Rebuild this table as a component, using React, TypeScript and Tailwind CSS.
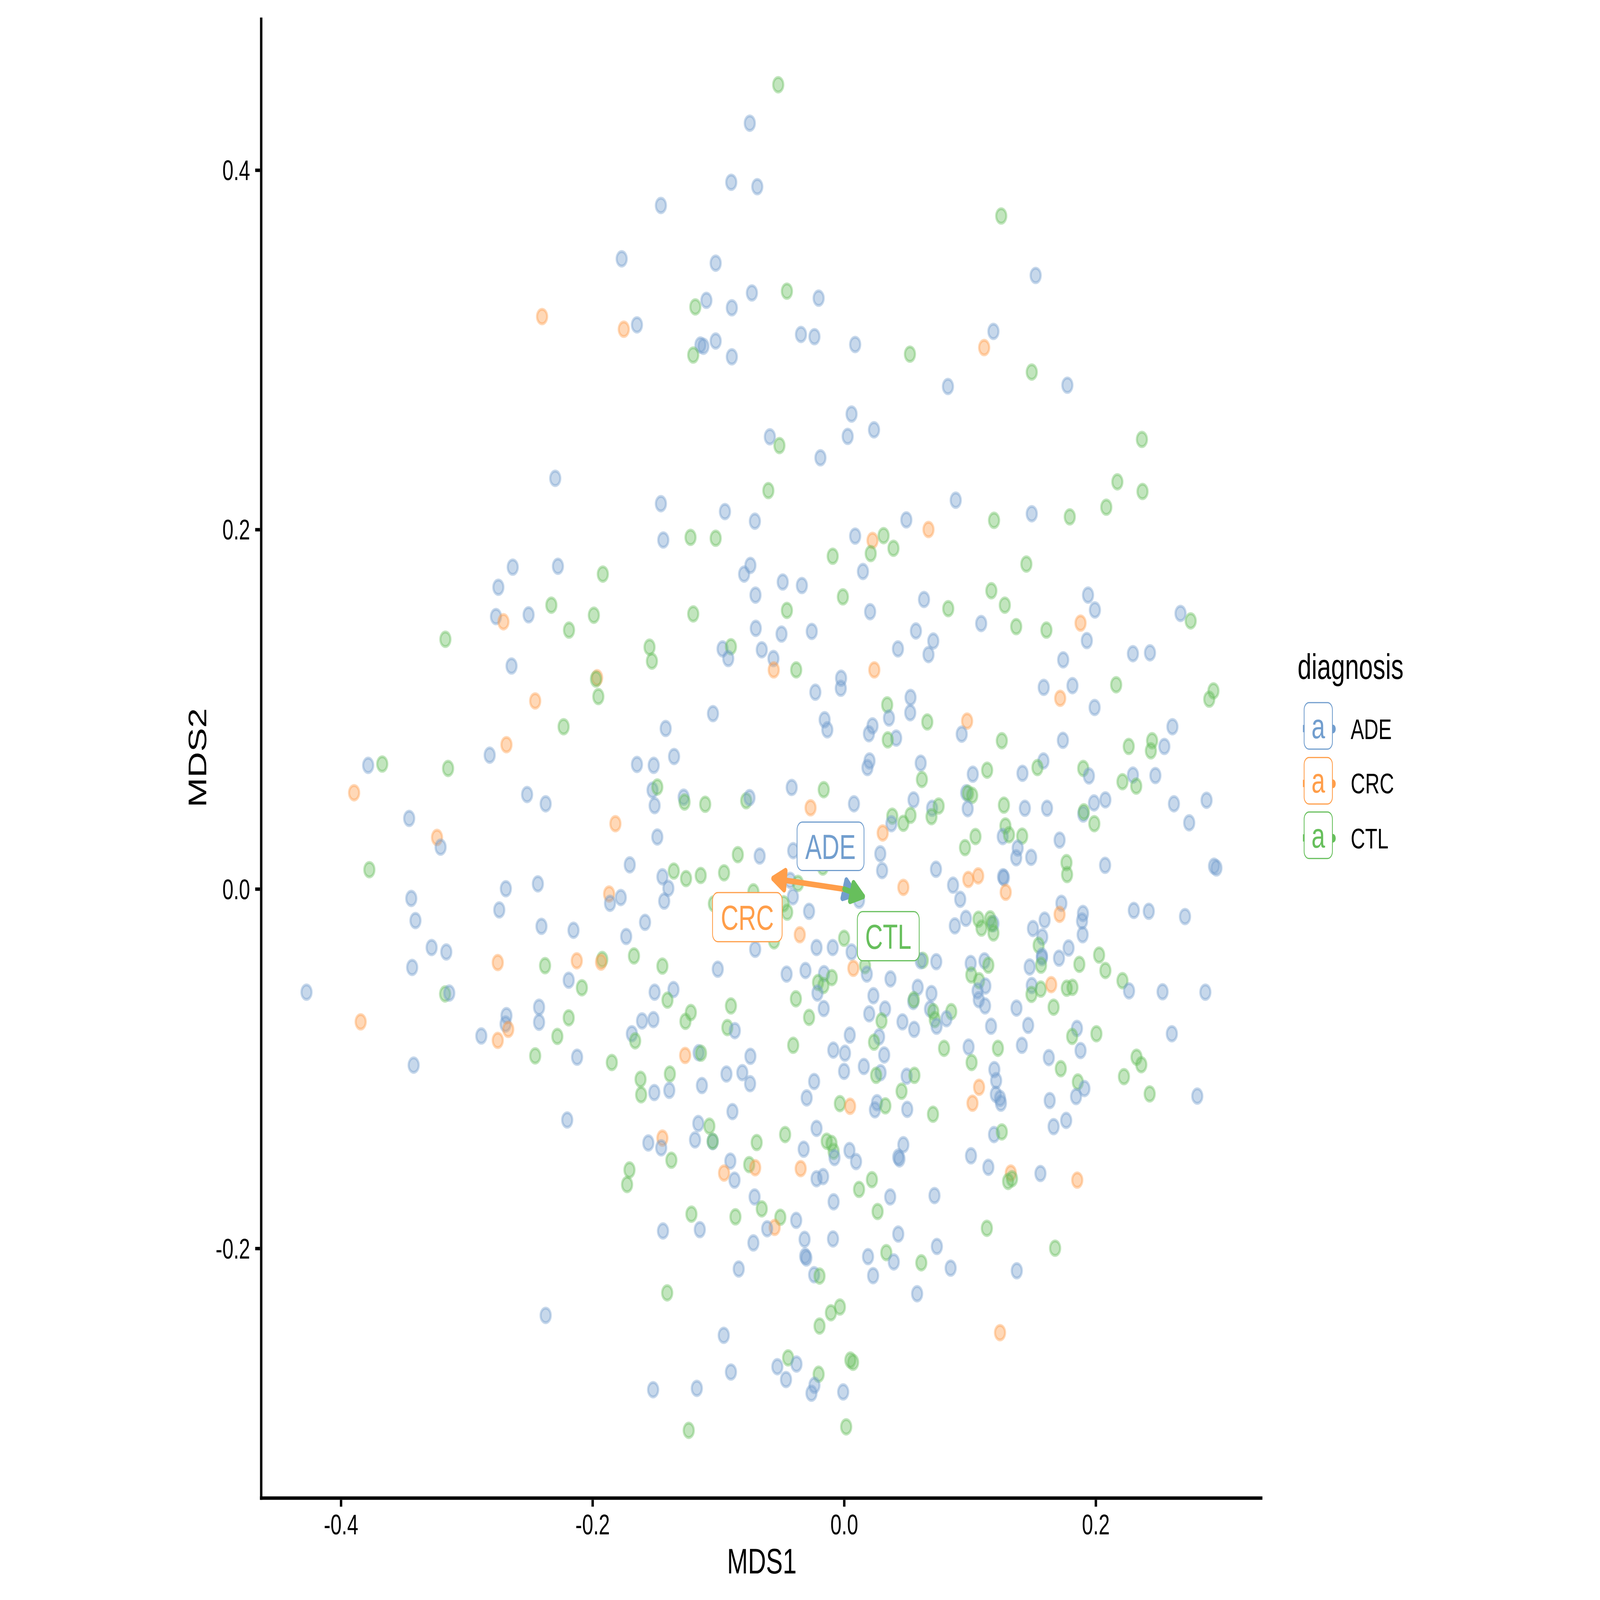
import React, { useEffect, useState } from 'react';

// MDS ordination plot, diagnosis groups

type Pt = [number, number, number];

const COLORS = ['#729ECE', '#FF9E4A', '#67BF5C'];

// point positions read off four crops of the plot: [list, left, top, height], each crop 1760 wide, sampled at 1568
const Q1: Pt[] = [[1525,125,0],[1463,260,0],[1550,270,0],[1228,313,0],[1097,435,0],[1411,445,0],[1532,513,0],[1380,530,0],[1343,545,2],[1465,547,0],[831,567,1],[1104,596,1],[1148,586,0],[1360,632,0],[1370,635,0],[1411,623,0],[1336,655,2],[1465,659,0],[875,937,0],[1228,995,0],[1442,1013,0],[1542,1035,0],[1327,1072,2],[1411,1074,2],[1236,1078,0],[733,1140,0],[884,1138,0],[1034,1156,2],[1527,1136,0],[1506,1156,0],[685,1186,0],[1544,1204,0],[862,1227,2],[677,1253,0],[702,1265,1],[786,1249,0],[1004,1250,2],[1336,1247,2],[508,1305,2],[921,1284,2],[1545,1280,0],[1190,1323,2],[1434,1327,0],[1462,1322,2],[1565,1329,0],[1198,1355,2],[1453,1349,0],[729,1366,0],[1015,1393,1],[1011,1396,2],[808,1446,1],[1019,1436,2],[1402,1475,0],[903,1505,2],[1244,1509,0],[712,1546,1]];

const Q2: Pt[] = [[52,37,2],[797,337,2],[912,473,0],[81,509,2],[187,525,0],[128,608,0],[173,613,0],[309,631,0],[492,653,2],[771,601,0],[740,638,1],[899,694,2],[619,727,0],[1018,724,0],[297,790,0],[372,826,0],[284,841,0],[24,842,0],[56,862,2],[193,890,0],[1267,848,2],[19,965,2],[1185,945,2],[1269,967,2],[645,987,0],[1148,1003,2],[899,1018,0],[1026,1025,2],[480,1032,0],[773,1033,2],[554,1054,1],[309,1069,0],[367,1079,1],[404,1068,2],[437,1097,2],[361,1109,2],[234,1115,2],[881,1133,2],[335,1150,0],[67,1174,0],[131,1182,0],[764,1194,2],[1087,1204,0],[268,1208,2],[539,1214,0],[809,1227,2],[620,1235,2],[1110,1238,0],[81,1239,2],[359,1242,0],[1396,1246,0],[1430,1263,2],[730,1269,0],[1062,1268,1],[847,1276,2],[948,1284,2],[164,1287,0],[512,1286,0],[63,1293,0],[570,1309,0],[1083,1308,0],[452,1327,0],[554,1340,0],[1237,1338,0],[1294,1336,0],[36,1349,0],[37,1375,1],[112,1375,2],[373,1375,1],[1004,1352,0],[262,1394,0],[261,1417,0],[176,1426,0],[939,1415,0],[1035,1411,0],[1181,1409,2],[994,1440,1],[1506,1423,2],[1492,1442,2],[416,1455,2],[494,1438,0],[422,1485,0],[493,1473,0],[207,1489,0],[216,1512,0],[550,1494,2],[683,1492,1],[1109,1461,0],[367,1503,0],[355,1521,0],[446,1531,0],[418,1535,2],[665,1522,0],[799,1537,2],[1003,1536,0],[1369,1505,0],[1301,1537,2],[1223,1550,2],[1342,1550,0],[1297,1560,2]];

const Q3: Pt[] = [[250,25,0],[297,22,2],[517,32,2],[656,2,0],[1148,23,0],[1204,25,0],[1272,5,0],[203,87,1],[781,91,0],[843,112,0],[1200,81,0],[1216,74,2],[1207,116,0],[1304,97,0],[1307,108,2],[1376,113,2],[1513,105,2],[1524,98,0],[387,145,0],[1076,157,1],[480,188,1],[492,210,0],[1216,187,0],[1485,227,2],[1558,230,0],[254,261,2],[1124,250,0],[1233,277,0],[1271,264,2],[1312,281,2],[1361,274,2],[1439,268,2],[710,304,0],[817,293,0],[1253,303,0],[1055,316,1],[1058,337,0],[1094,324,0],[1239,332,0],[1537,311,2],[394,326,0],[688,352,0],[1405,338,2],[408,376,0],[829,389,0],[936,398,0],[1175,380,0],[1112,412,0],[1543,441,0],[462,437,0],[511,447,0],[683,471,1],[841,478,2],[947,467,1],[1032,464,2],[1028,470,1],[1138,456,2],[1233,479,2],[397,482,0],[1418,486,0],[44,538,0],[507,542,2],[521,540,0],[920,511,0],[964,528,2],[1207,538,0],[1270,532,0],[1250,556,2],[1462,569,2],[225,605,1],[712,591,0],[709,610,0],[718,622,1],[821,572,0],[821,606,0],[920,596,2],[1165,603,0],[1203,600,0],[1328,584,2],[1310,604,2],[628,637,0],[683,647,1],[882,638,2],[1131,632,0],[1142,648,2],[1450,618,2],[1475,625,0],[402,703,0],[808,682,2],[948,685,0],[1064,697,2],[1309,681,1],[1354,675,0],[1362,676,2],[1527,683,0],[1160,735,2],[1258,723,2],[1447,723,0],[1500,720,0],[1162,770,2],[1206,765,0],[1256,760,0],[1365,749,0],[1526,745,0],[915,827,0],[1467,808,0],[1353,835,0],[1390,841,2],[1233,868,1],[1186,879,0],[1229,890,0],[1342,872,0],[1401,876,0],[1401,875,2],[1548,878,2],[1263,918,2],[1460,920,0],[1523,928,2],[1543,935,1],[1123,940,2],[1439,947,1],[1115,973,2],[1474,963,0],[1541,1001,0],[1565,1028,2],[1330,1040,2],[1477,1046,2],[1358,1075,0],[1235,1078,0],[1537,1105,0],[1488,1164,0],[1249,1218,2],[843,1269,0],[1438,1314,0],[1462,1397,0],[1202,1437,0],[1348,1434,0],[1321,1529,2]];

const Q4: Pt[] = [[357,15,0],[350,30,0],[528,20,0],[938,15,0],[918,30,2],[1071,32,2],[1090,49,0],[702,45,0],[750,36,2],[532,57,2],[868,43,0],[1237,47,0],[1202,62,2],[1248,72,2],[1312,48,0],[97,75,0],[204,80,2],[160,121,1],[305,112,0],[504,103,0],[680,87,0],[686,88,2],[700,93,2],[685,123,0],[806,115,2],[876,122,0],[950,122,0],[1107,110,0],[1145,103,0],[1374,112,0],[1483,104,0],[1425,155,0],[433,140,2],[494,138,2],[470,156,2],[430,157,0],[566,122,0],[588,117,2],[564,141,2],[401,178,1],[811,162,2],[802,186,0],[823,182,2],[867,185,2],[711,186,2],[676,211,2],[852,212,0],[847,234,0],[897,233,0],[992,194,0],[1071,135,0],[1073,130,2],[1108,157,2],[102,218,0],[393,225,0],[399,263,0],[201,255,2],[579,260,0],[687,283,1],[720,275,1],[803,277,0],[806,279,0],[812,312,1],[1015,245,2],[1017,272,2],[1144,251,0],[1508,253,0],[1516,257,0],[636,296,0],[470,301,1],[92,285,0],[118,292,2],[101,322,0],[70,338,2],[82,357,2],[155,355,0],[660,328,0],[322,330,0],[998,337,0],[992,362,1],[1070,360,0],[1067,377,0],[1069,408,0],[1240,353,0],[1290,355,0],[1411,367,0],[642,388,0],[679,371,0],[721,373,2],[760,372,2],[731,393,2],[771,383,0],[765,383,2],[771,404,2],[903,394,0],[942,375,0],[934,413,0],[922,432,2],[933,456,0],[933,460,0],[930,477,2],[990,461,0],[1022,438,0],[1058,475,2],[1124,454,2],[1145,489,2],[124,408,1],[180,437,0],[234,437,0],[272,416,2],[297,447,0],[38,422,2],[303,484,1],[342,478,2],[348,497,0],[535,466,2],[528,467,0],[580,469,0],[80,497,0],[143,489,0],[205,496,0],[231,505,2],[185,516,2],[203,523,2],[183,540,0],[111,553,2],[204,575,0],[155,595,2],[427,508,0],[370,546,0],[356,587,0],[409,576,0],[397,603,2],[518,527,0],[564,541,0],[503,559,0],[505,555,2],[559,576,0],[570,582,2],[575,600,2],[581,615,0],[630,582,2],[614,598,0],[467,605,0],[506,622,0],[695,473,0],[741,467,0],[754,477,2],[697,499,2],[723,512,2],[744,524,0],[718,535,0],[722,555,0],[743,569,0],[892,481,0],[899,523,0],[898,543,2],[929,531,2],[964,521,1],[1016,529,2],[1035,527,2],[972,572,2],[848,574,0],[887,613,0],[763,615,0],[1202,512,2],[1224,535,0],[1336,537,0],[1479,538,0],[1050,620,0],[1034,638,2],[1115,632,2],[1367,632,0],[102,658,2],[291,635,0],[236,669,0],[275,676,0],[389,639,0],[372,651,2],[406,680,0],[606,665,2],[688,662,0],[698,697,2],[786,665,2],[866,658,0],[956,686,0],[1062,670,0],[1249,685,2],[1265,702,2],[996,711,2],[1207,729,2],[272,717,0],[338,706,0],[394,720,0],[379,726,2],[481,728,0],[507,726,2],[172,740,0],[147,777,0],[464,762,2],[258,790,2],[292,796,1],[382,788,0],[375,804,0],[410,795,2],[483,803,0],[569,814,2],[774,713,0],[780,738,0],[723,753,1],[779,769,0],[793,778,0],[796,789,0],[701,789,1],[1053,741,2],[1075,756,0],[1047,774,0],[959,783,0],[1293,768,2],[1452,773,0],[1014,828,0],[972,842,0],[180,846,0],[75,860,2],[214,875,2],[230,880,2],[137,893,0],[237,898,2],[240,912,0],[290,896,0],[312,921,0],[470,883,0],[453,911,0],[457,915,0],[773,860,0],[799,854,2],[696,908,0],[754,934,0],[127,937,1],[180,960,0],[202,955,0],[829,947,1],[820,966,2],[833,960,2],[928,948,0],[1051,963,1],[365,962,2],[322,984,2],[426,1001,0],[574,998,0],[237,1012,0],[59,1047,2],[40,1070,1],[15,1073,0],[112,1054,0],[384,1034,2],[140,1097,0],[235,1096,0],[453,1085,0],[749,1072,2],[582,1113,0],[977,1117,2],[142,1135,0],[146,1139,0],[413,1127,2],[352,1136,0],[438,1148,0],[530,1150,2],[628,1162,0],[849,1168,0],[172,1177,0],[190,1180,2],[369,1179,0],[516,1220,0],[258,1250,2],[228,1263,2],[190,1293,2],[793,1308,1],[85,1365,2],[49,1385,0],[113,1379,0],[293,1370,2],[302,1375,2],[78,1414,0],[187,1402,2],[173,1427,0],[163,1445,0],[269,1442,0],[279,1521,2]];

const crops: [Pt[], number, number, number][] = [
  [Q1, 1100, 180, 1800],
  [Q2, 2860, 180, 1800],
  [Q3, 1100, 1980, 1820],
  [Q4, 2860, 1980, 1820],
];

const points = crops.flatMap(([list, ox, oy, h]) =>
  list.map(([x, y, c]) => ({ x: ox + (x * 1760) / 1568, y: oy + (y * h) / 1568, c }))
);

// data -> pixel
const UNIT = 4717.5;
const X0 = 3166;
const Y0 = 2334;
const px = (v: number) => X0 + v * UNIT;
const py = (v: number) => Y0 - v * UNIT;

const PAGE_W = 6000;
const PAGE_H = 4200;

const arrowHead = (tx: number, ty: number, angle: number, len = 50) => {
  const back = angle + Math.PI;
  const a1 = back + Math.PI / 6;
  const a2 = back - Math.PI / 6;
  return `${tx},${ty} ${tx + len * Math.cos(a1)},${ty + len * Math.sin(a1)} ${tx + len * Math.cos(a2)},${ty + len * Math.sin(a2)}`;
};

const arrows = [
  { tx: 3208, ty: 2347, color: COLORS[0] },
  { tx: 2900, ty: 2306, color: COLORS[1] },
  { tx: 3236, ty: 2353, color: COLORS[2] },
];

const labels = [
  { text: 'ADE', x: 2989, y: 2158, w: 251, h: 127, color: COLORS[0] },
  { text: 'CRC', x: 2672, y: 2343, w: 261, h: 129, color: COLORS[1] },
  { text: 'CTL', x: 3215, y: 2393, w: 232, h: 129, color: COLORS[2] },
];

const xTicks = [-0.4, -0.2, 0, 0.2];
const yTicks = [-0.2, 0, 0.2, 0.4];

const Plot: React.FC = () => (
  <svg width={4800} height={4200} className="shrink-0">
    {points.map((p, i) => (
      <circle
        key={i}
        cx={p.x}
        cy={p.y}
        r={19}
        fill={COLORS[p.c]}
        fillOpacity={0.4}
        stroke={COLORS[p.c]}
        strokeOpacity={0.4}
        strokeWidth={8}
      />
    ))}

    {arrows.map((a, i) => {
      const angle = Math.atan2(a.ty - Y0, a.tx - X0);
      return (
        <g key={i} stroke={a.color} fill={a.color} strokeWidth={15} strokeLinecap="round" strokeLinejoin="round">
          <line x1={X0} y1={Y0} x2={a.tx} y2={a.ty} />
          <polygon points={arrowHead(a.tx, a.ty, angle)} />
        </g>
      );
    })}

    {labels.map((l) => (
      <g key={l.text}>
        <rect x={l.x} y={l.y} width={l.w} height={l.h} rx={20} fill="#fff" stroke={l.color} strokeWidth={3} />
        <text x={l.x + l.w / 2} y={l.y + l.h / 2 + 33} textAnchor="middle" fontSize={92} fill={l.color}>
          {l.text}
        </text>
      </g>
    ))}

    {/* axes */}
    <rect x={975} y={46} width={9} height={3891} fill="#000" />
    <rect x={975} y={3928} width={3759} height={9} fill="#000" />
    {yTicks.map((v) => (
      <g key={`y${v}`}>
        <rect x={957} y={py(v) - 4.5} width={18} height={9} fill="#000" />
        <text x={938} y={py(v) + 26} textAnchor="end" fontSize={75} fill="#000">
          {v.toFixed(1)}
        </text>
      </g>
    ))}
    {xTicks.map((v) => (
      <g key={`x${v}`}>
        <rect x={px(v) - 4.5} y={3937} width={9} height={18} fill="#000" />
        <text x={px(v)} y={4028} textAnchor="middle" fontSize={75} fill="#000">
          {v.toFixed(1)}
        </text>
      </g>
    ))}
    <text x={2857} y={4130} textAnchor="middle" fontSize={94} fill="#000">
      MDS1
    </text>
    <text transform="translate(774,1989) rotate(-90)" textAnchor="middle" fontSize={94} fill="#000">
      MDS2
    </text>
  </svg>
);

const LegendRow: React.FC<{ label: string; box: string; bar: string }> = ({ label, box, bar }) => (
  <div className="flex items-center h-[125px]">
    <div className={`relative w-[109px] h-[125px] border-[3px] rounded-[20px] bg-white flex items-center justify-center ${box}`}>
      <div className={`absolute left-[-6px] top-[57px] w-[6px] h-[19px] ${bar}`} />
      <div className={`absolute left-[106px] top-[56px] w-[11px] h-[23px] rounded-r-full ${bar}`} />
      <span className="text-[92px] leading-none">a</span>
    </div>
    <span className="ml-[67px] mt-[17px] text-[75px] leading-[75px] text-black">{label}</span>
  </div>
);

// the figure is laid out at 6000x4200; stretch it onto whatever window it gets
const useFit = () => {
  const read = () => ({ x: window.innerWidth / PAGE_W, y: window.innerHeight / PAGE_H });
  const [fit, setFit] = useState(read);
  useEffect(() => {
    const onResize = () => setFit(read());
    window.addEventListener('resize', onResize);
    return () => window.removeEventListener('resize', onResize);
  }, []);
  return fit;
};

const App: React.FC = () => {
  const fit = useFit();

  return (
    <div className="w-screen h-screen overflow-hidden bg-white">
      <div
        className="w-[6000px] h-[4200px] origin-top-left bg-white flex items-start font-['Liberation_Sans',Arial,sans-serif]"
        style={{ transform: `scale(${fit.x}, ${fit.y})` }}
      >
        <Plot />
        <div className="ml-[66px] mt-[1703px] flex flex-col">
          <div className="text-[94px] leading-[94px] text-black">diagnosis</div>
          <div className="mt-[46px] pl-[23px] flex flex-col gap-[18.5px]">
            <LegendRow label="ADE" box="border-[#729ECE] text-[#729ECE]" bar="bg-[#729ECE]" />
            <LegendRow label="CRC" box="border-[#FF9E4A] text-[#FF9E4A]" bar="bg-[#FF9E4A]" />
            <LegendRow label="CTL" box="border-[#67BF5C] text-[#67BF5C]" bar="bg-[#67BF5C]" />
          </div>
        </div>
      </div>
    </div>
  );
};

export default App;
